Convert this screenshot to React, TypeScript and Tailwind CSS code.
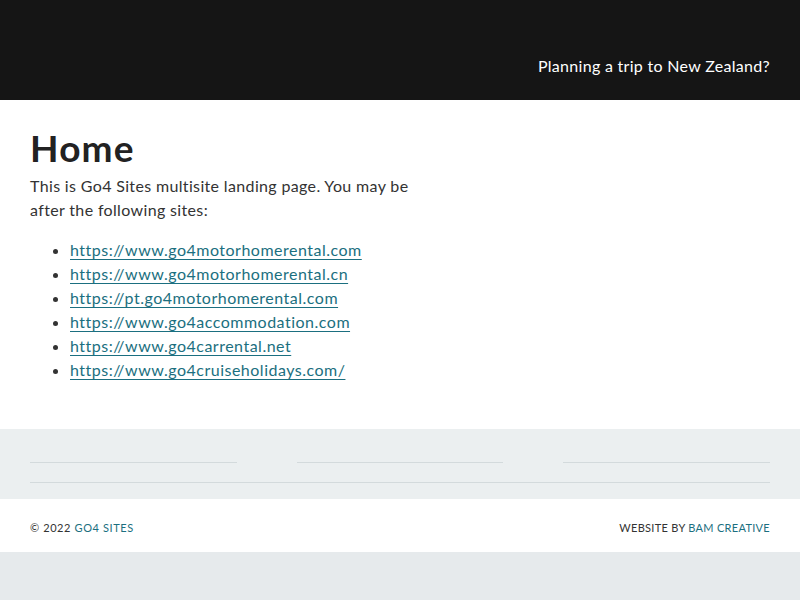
import React from "react";

const links = [
  "https://www.go4motorhomerental.com",
  "https://www.go4motorhomerental.cn",
  "https://pt.go4motorhomerental.com",
  "https://www.go4accommodation.com",
  "https://www.go4carrental.net",
  "https://www.go4cruiseholidays.com/",
];

export default function App() {
  return (
    <div className="min-h-[600px] bg-[#e6eaec] font-['Lato','Open_Sans',sans-serif] text-[#333]">
      <header className="h-[100px] bg-[#151515] flex items-end justify-end px-[30px] pb-[24px]">
        <span className="text-white text-[16px] leading-[20px] tracking-[0.3px]">Planning a trip to New Zealand?</span>
      </header>
      <main className="bg-white px-[30px] pt-[26px] pb-[47px]">
        <h1 className="text-[37px] leading-[44px] font-bold text-[#222] tracking-[1.2px]">Home</h1>
        <p className="mt-[4px] text-[16px] leading-[24px] max-w-[390px] text-[#333] tracking-[0.35px]">
          This is Go4 Sites multisite landing page. You may be after the following sites:
        </p>
        <ul className="mt-[16px] list-disc pl-[40px] text-[16px] leading-[24px] tracking-[0.5px]">
          {links.map((l) => (
            <li key={l}>
              <a href="#" className="text-[#1b6f80] underline underline-offset-[3px]">{l}</a>
            </li>
          ))}
        </ul>
      </main>
      <section className="bg-[#ebeff0] px-[30px] pt-[33px] pb-[16px]">
        <div className="grid grid-cols-3 gap-[60px]">
          <div className="border-t border-[#d3dadc]" />
          <div className="border-t border-[#d3dadc]" />
          <div className="border-t border-[#d3dadc]" />
        </div>
        <div className="mt-[19px] border-t border-[#d3dadc]" />
      </section>
      <footer className="bg-white h-[53px] px-[30px] pt-[22px] flex items-start justify-between text-[11px] leading-[14px] uppercase text-[#333]">
        <span className="tracking-[0.6px]">
          © 2022 <a href="#" className="text-[#1b6f80]">Go4 Sites</a>
        </span>
        <span className="tracking-[0.3px]">
          Website by <a href="#" className="text-[#1b6f80]">BAM Creative</a>
        </span>
      </footer>
    </div>
  );
}
